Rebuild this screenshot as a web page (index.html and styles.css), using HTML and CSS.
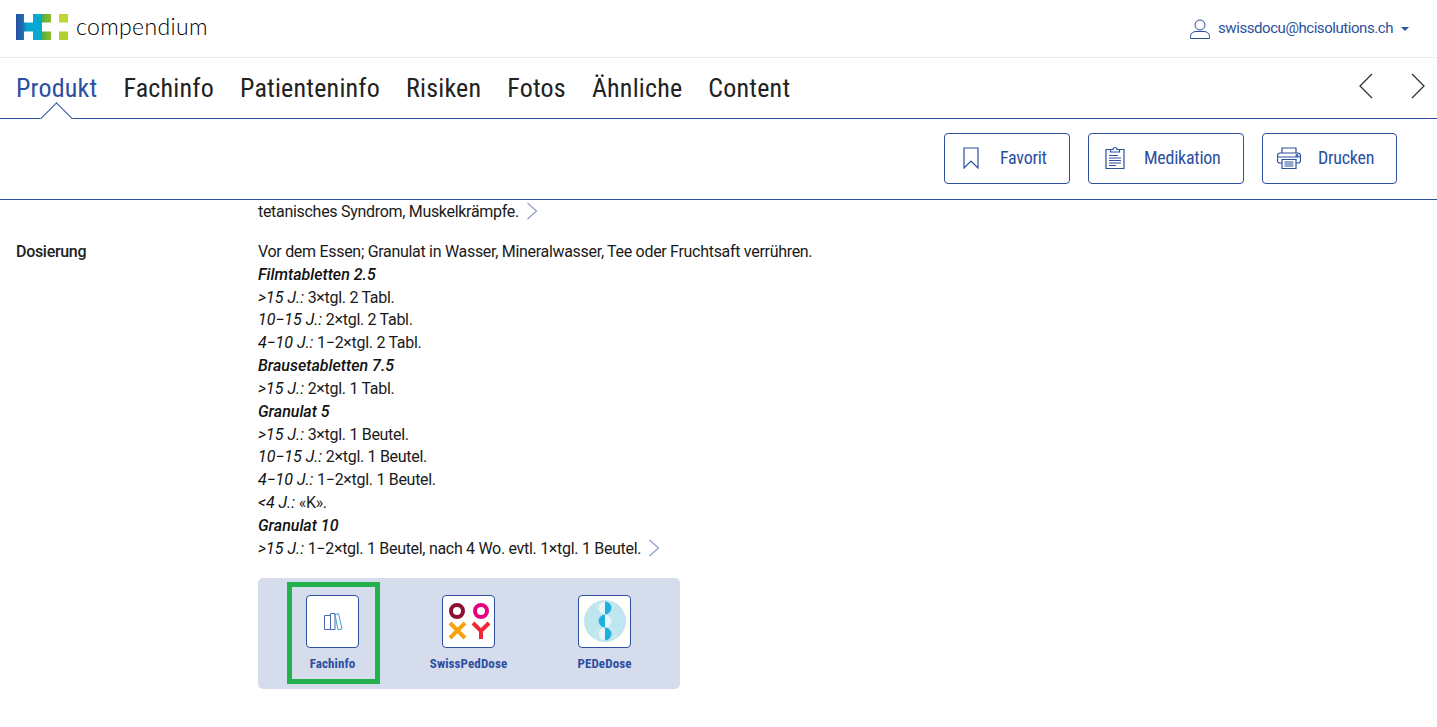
FILE: index.html
```html
<!DOCTYPE html>
<html lang="de">
<head>
  <meta charset="UTF-8">
  <meta name="viewport" content="width=device-width, initial-scale=1.0">
  <title>compendium</title>
  <link rel="stylesheet" href="styles.css">
</head>
<body>
  <!-- Top bar -->
  <header class="topbar">
    <div class="logo">
      <svg class="logo-mark" width="52" height="26" viewBox="0 0 52 26">
        <defs>
          <linearGradient id="logo-grad" gradientUnits="userSpaceOnUse" x1="0" y1="0" x2="35" y2="0">
            <stop offset="0" stop-color="#2a4f9f"/>
            <stop offset="0.2" stop-color="#1c6fb4"/>
            <stop offset="0.32" stop-color="#08a9d0"/>
            <stop offset="0.73" stop-color="#08a9d0"/>
            <stop offset="0.74" stop-color="#4fae42"/>
            <stop offset="1" stop-color="#8fbc2b"/>
          </linearGradient>
        </defs>
        <path fill="url(#logo-grad)" d="M0 0h8v8.500h9V0h18v8.500H26v9h9V26H17v-8.500H8V26H0z"/>
        <rect x="43" y="0" width="9" height="8.500" fill="#c3d531"/>
        <rect x="43" y="17.500" width="9" height="8.500" fill="#b5cf2c"/>
      </svg>
      <span class="logo-text">compendium</span>
    </div>
    <div class="user-menu">
      <svg width="20" height="20" viewBox="0 0 20 20" fill="none" stroke="#2c4f9e" stroke-width="1">
        <circle cx="10" cy="6" r="5"/>
        <path d="M.5 19.500v-2c0-3 2.500-5 5.500-5h8c3 0 5.500 2 5.500 5v2z"/>
      </svg>
      <span>swissdocu@hcisolutions.ch</span>
      <span class="caret"></span>
    </div>
  </header>

  <!-- Tabs -->
  <nav class="tabs">
    <a class="tab active">Produkt</a>
    <a class="tab">Fachinfo</a>
    <a class="tab">Patienteninfo</a>
    <a class="tab">Risiken</a>
    <a class="tab">Fotos</a>
    <a class="tab">Ähnliche</a>
    <a class="tab">Content</a>
    <div class="tab-arrows">
      <svg width="16" height="26" viewBox="0 0 16 26" fill="none" stroke="#333" stroke-width="1.300"><path d="M14 1 2 13l12 12"/></svg>
      <svg width="16" height="26" viewBox="0 0 16 26" fill="none" stroke="#333" stroke-width="1.300"><path d="m2 1 12 12L2 25"/></svg>
    </div>
  </nav>

  <!-- Actions -->
  <div class="actions">
    <button class="action-btn btn-favorit">
      <svg width="16" height="22" viewBox="0 0 16 22" fill="none" stroke="#2c4f9e" stroke-width="1.200"><path d="M1 1h14v20l-7-7-7 7z"/></svg>
      Favorit
    </button>
    <button class="action-btn btn-medikation">
      <svg width="20" height="23" viewBox="0 0 20 23" fill="none" stroke="#2c4f9e" stroke-width="1.200">
        <path d="M5.500 3.500H1v19h18v-19h-4.500"/>
        <path d="M5.500 6V3.500h2.500a2 2 0 0 1 4 0h2.500V6z"/>
        <path d="M4 9.500h9M4 12h12M4 14.500h12M4 17h12M4 19.500h7"/>
      </svg>
      Medikation
    </button>
    <button class="action-btn btn-drucken">
      <svg width="24" height="22" viewBox="0 0 24 22" fill="none" stroke="#2c4f9e" stroke-width="1.200">
        <path d="M5 6V1h14v5"/>
        <path d="M5 16H3a2.500 2.500 0 0 1-2.500-2.500v-5A2.500 2.500 0 0 1 3 6h18a2.500 2.500 0 0 1 2.500 2.500v5A2.500 2.500 0 0 1 21 16h-2"/>
        <path d="M5 12.500h14v9H5zM7.500 15h9M7.500 17h9M7.500 19h9M1 10h22"/>
        <circle cx="20" cy="8.500" r="1"/>
      </svg>
      Drucken
    </button>
  </div>

  <!-- Content -->
  <main class="content">
    <div class="row row-first">
      <div class="row-label"></div>
      <div class="row-text">tetanisches Syndrom, Muskelkrämpfe. <svg class="more" width="12" height="18" viewBox="0 0 12 18" fill="none" stroke="#8c9cc8" stroke-width="1.200"><path d="m1.500 1 9 8-9 8"/></svg></div>
    </div>
    <div class="row">
      <div class="row-label">Dosierung</div>
      <div class="row-text">
        Vor dem Essen; Granulat in Wasser, Mineralwasser, Tee oder Fruchtsaft verrühren.<br>
        <b><i>Filmtabletten 2.5</i></b><br>
        <i>&gt;15 J.:</i> 3×tgl. 2 Tabl.<br>
        <i>10−15 J.:</i> 2×tgl. 2 Tabl.<br>
        <i>4−10 J.:</i> 1−2×tgl. 2 Tabl.<br>
        <b><i>Brausetabletten 7.5</i></b><br>
        <i>&gt;15 J.:</i> 2×tgl. 1 Tabl.<br>
        <b><i>Granulat 5</i></b><br>
        <i>&gt;15 J.:</i> 3×tgl. 1 Beutel.<br>
        <i>10−15 J.:</i> 2×tgl. 1 Beutel.<br>
        <i>4−10 J.:</i> 1−2×tgl. 1 Beutel.<br>
        <i>&lt;4 J.:</i> «K».<br>
        <b><i>Granulat 10</i></b><br>
        <i>&gt;15 J.:</i> 1−2×tgl. 1 Beutel, nach 4 Wo. evtl. 1×tgl. 1 Beutel. <svg class="more" width="12" height="18" viewBox="0 0 12 18" fill="none" stroke="#8c9cc8" stroke-width="1.200"><path d="m1.500 1 9 8-9 8"/></svg>

        <div class="tools">
          <div class="tool tool-marked">
            <div class="tool-icon">
              <svg width="20" height="20" viewBox="0 0 20 20" fill="none" stroke="#4a66ad">
                <path d="M1.500 4.500h6v14h-6zM7.500 2.500h4.500v16H7.500z"/>
                <path d="m12 3.500 3.500-1 3.500 15.500-4 .800z" stroke="#3f9fd0"/>
              </svg>
            </div>
            <span class="tool-label">Fachinfo</span>
          </div>
          <div class="tool">
            <div class="tool-icon">
              <svg width="44" height="44" viewBox="0 0 44 44" fill="none" stroke-width="4">
                <circle cx="10" cy="12" r="6" stroke="#8c1030"/>
                <circle cx="34" cy="12" r="6" stroke="#e6007e"/>
                <path d="m3 24 15 15M18 24 3 39" stroke="#f7a30f"/>
                <path d="m26 24 8 8 8-8M34 32v8" stroke="#ee2737"/>
              </svg>
            </div>
            <span class="tool-label">SwissPedDose</span>
          </div>
          <div class="tool">
            <div class="tool-icon">
              <svg width="44" height="44" viewBox="0 0 44 44">
                <circle cx="22" cy="22" r="21" fill="#bfe5ee"/>
                <path d="M14 3c-6 8 14 12 8 19s-14 12-8 19M30 3c6 8-14 12-8 19s14 12 8 19" fill="none" stroke="#d6eff5"/>
                <circle cx="22" cy="9" r="6.500" fill="#e5f5f9"/>
                <circle cx="22" cy="22" r="6.500" fill="#e5f5f9"/>
                <circle cx="22" cy="35" r="6.500" fill="#e5f5f9"/>
                <path d="M22 2.500a6.500 6.500 0 0 1 0 13zM22 15.500a6.500 6.500 0 0 0 0 13zM22 28.500a6.500 6.500 0 0 1 0 13z" fill="#1eb1dd"/>
              </svg>
            </div>
            <span class="tool-label">PEDeDose</span>
          </div>
        </div>
      </div>
    </div>
  </main>
</body>
</html>
```

FILE: styles.css
```css
*, *::after {
  box-sizing: border-box;
}
body {
  margin: 0;
  font-family: Roboto, "Liberation Sans", sans-serif;
  font-size: 16px;
  line-height: 22.85px;
  color: #222;
  background-color: white;
  overflow: hidden;
  height: 727px;
}
.topbar {
  display: flex;
  justify-content: space-between;
  align-items: center;
  height: 58px;
  padding: 0 28px 4px 16px;
  border-bottom: 1px solid #ececec;
}
.logo {
  display: flex;
  align-items: center;
  gap: 8px;
}
.logo-text {
  font-family: Lato, sans-serif;
  font-size: 23px;
  font-weight: 300;
  letter-spacing: .35px;
  color: #000;
}
.user-menu {
  display: flex;
  align-items: center;
  gap: 8px;
  padding-top: 4px;
  font-size: 15px;
  letter-spacing: -.44px;
  color: #2c4f9e;
}
.caret {
  width: 0;
  height: 0;
  border-left: 4px solid transparent;
  border-right: 4px solid transparent;
  border-top: 4px solid #2c4f9e;
}
.tabs {
  display: flex;
  align-items: center;
  gap: 26px;
  height: 61px;
  padding: 0 11px 0 16px;
  border-bottom: 1px solid #2c4f9e;
}
.tab {
  font-size: 26px;
  font-stretch: 75%;
  letter-spacing: .2px;
  color: #222;
}
.tab.active {
  position: relative;
  color: #2c4f9e;
}
.tab.active::after {
  content: "";
  position: absolute;
  left: 29px;
  bottom: -31px;
  width: 23px;
  height: 23px;
  background: white;
  border-left: 1px solid #2c4f9e;
  border-top: 1px solid #2c4f9e;
  transform: rotate(45deg);
}
.tab-arrows {
  display: flex;
  gap: 36px;
  margin-left: auto;
  margin-bottom: 4px;
}
.actions {
  display: flex;
  justify-content: flex-end;
  gap: 18px;
  height: 81px;
  padding: 14px 40px 0 0;
  border-bottom: 1px solid #2c4f9e;
}
.action-btn {
  display: flex;
  align-items: center;
  height: 51px;
  padding: 0 0 2px 18px;
  font-family: inherit;
  font-size: 18px;
  font-stretch: 75%;
  letter-spacing: -.25px;
  color: #2c4f9e;
  background: white;
  border: 1px solid #2c4f9e;
  border-radius: 4px;
}
.btn-favorit {
  width: 126px;
  gap: 21px;
}
.btn-medikation {
  width: 156px;
  gap: 19px;
  padding-left: 16px;
}
.btn-drucken {
  width: 135px;
  gap: 17px;
  padding-left: 14px;
}
.content {
  padding: 1px 16px 0;
}
.row {
  display: flex;
  padding-top: 17px;
}
.row-first {
  padding-top: 0;
}
.row-label {
  width: 242px;
  font-weight: 500;
  letter-spacing: -.3px;
}
.row-text {
  flex: 1;
  letter-spacing: -.3px;
  color: #1a1a1a;
}
.row-text i {
  letter-spacing: 0;
  color: #111;
}
.row-text b i {
  font-weight: 500;
}
.more {
  margin-left: 3px;
  vertical-align: -3px;
}
.tools {
  display: flex;
  width: 422px;
  height: 111px;
  margin-top: 17px;
  padding: 17px 0 0 6.5px;
  background-color: #d5dcec;
  border-radius: 5px;
}
.tool {
  position: relative;
  display: flex;
  flex-direction: column;
  align-items: center;
  gap: 5px;
  width: 136px;
}
.tool-marked::after {
  content: "";
  position: absolute;
  left: 22.5px;
  top: -13px;
  width: 93px;
  height: 102px;
  border: 5px solid #22b14c;
}
.tool-icon {
  display: flex;
  align-items: center;
  justify-content: center;
  width: 53px;
  height: 53px;
  background: white;
  border: 1px solid #2c4f9e;
  border-radius: 4px;
}
.tool-label {
  font-size: 13px;
  font-weight: 700;
  font-stretch: 75%;
  letter-spacing: .1px;
  color: #2c4f9e;
}
```
